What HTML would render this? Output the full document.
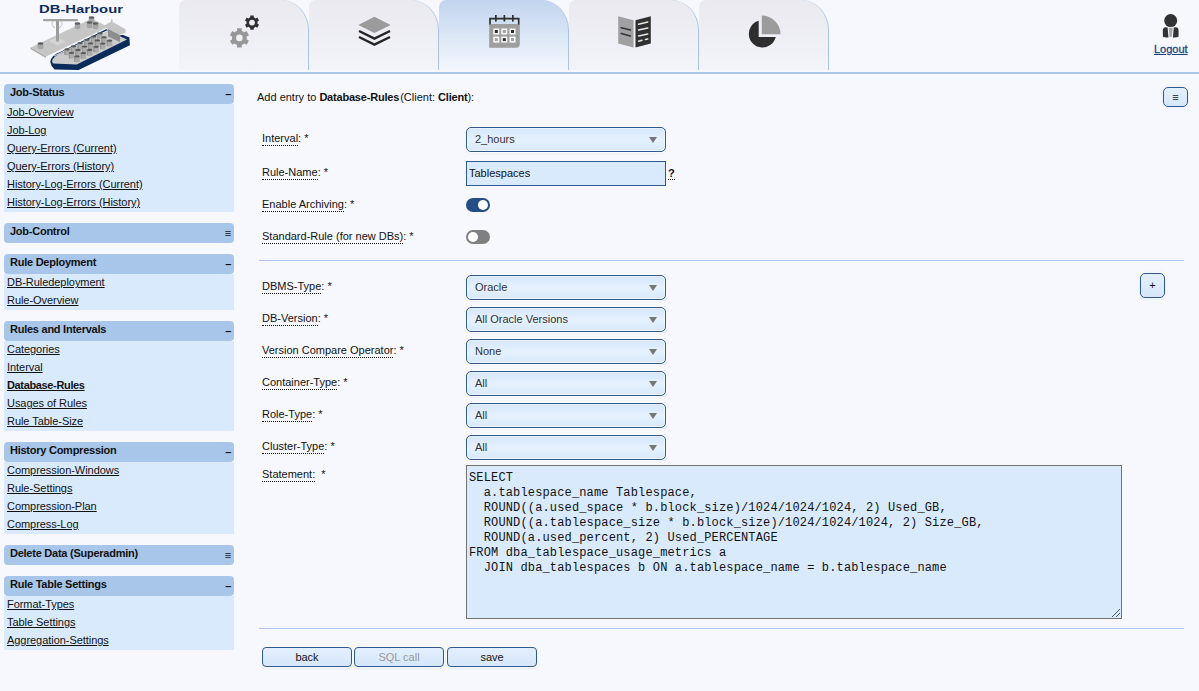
<!DOCTYPE html>
<html><head><meta charset="utf-8">
<style>
*{box-sizing:border-box;margin:0;padding:0}
html,body{width:1199px;height:691px;overflow:hidden;background:#f7f8fd;font-family:"Liberation Sans",sans-serif;font-size:11px;color:#111}
.abs{position:absolute}
#hdrline{position:absolute;left:0;top:72px;width:1199px;height:2px;background:#a9c5e9}
.tab{position:absolute;top:0;width:130px;height:70px;border-radius:7px 28px 0 0 / 7px 30px 0 0;background:linear-gradient(#e9e9ef,#f3f4f9);border-right:1px solid #a9c5ea}
.tab.act{background:linear-gradient(#c2d5ef,#f3f6fd)}
.logout{position:absolute;left:1154px;top:43px;color:#1b4585;text-decoration:underline;font-size:11px;-webkit-text-stroke:0.3px #1b4585}
.sec{position:absolute;left:4px;width:230px}
.sh{height:20px;background:#a8c6ea;border-radius:4px;font-weight:bold;letter-spacing:-0.25px;padding-left:6px;line-height:16px;position:relative}
.sh.c{border-radius:4px}
.sh .t{position:absolute;right:3px;top:2px;font-size:11px}
.si{background:#daeafd}
.si a{display:block;height:18px;line-height:16px;padding-left:3px;color:#111;text-decoration:underline;letter-spacing:-0.05px}
.lbl{position:absolute;left:262px}
.lbl span{border-bottom:1px dotted #111;padding-bottom:1px}
.sel{position:absolute;left:466px;width:200px;height:25px;border:1px solid #2f5a8f;border-radius:5px;background:linear-gradient(#d6e8fd,#e5f1fe 50%,#d9eafd);padding-left:8px;line-height:23px;color:#333;box-shadow:inset 0 0 0 1px rgba(255,255,255,.45),0 0 0 1px rgba(255,255,255,.8),0 1px 2px 1px rgba(0,0,0,.035)}
.sel:after{content:"";position:absolute;right:8.5px;top:9px;border-left:4px solid transparent;border-right:4px solid transparent;border-top:6px solid #777}
.inp{position:absolute;left:466px;top:161px;width:200px;height:25px;border:1.5px solid #2f5a8f;background:#daeafd;padding-left:2px;line-height:22px;color:#111}
.tog{position:absolute;left:466px;width:24px;height:14px;border-radius:7px}
.tog i{position:absolute;top:2px;width:10px;height:10px;border-radius:50%;background:#fff}
.btn{position:absolute;top:647px;height:20px;width:90px;border:1px solid #2f5a8f;border-radius:4px;background:linear-gradient(#e3effd,#d6e7fb);text-align:center;line-height:18px;box-shadow:0 0 0 1px rgba(255,255,255,.8),0 1px 2px 1px rgba(0,0,0,.06)}
.sq{position:absolute;border:1.3px solid #2f5a8f;border-radius:5px;background:linear-gradient(#e3effd,#d6e7fb);text-align:center;box-shadow:0 0 4px rgba(120,130,200,.12)}
.hr{position:absolute;left:259px;width:925px;height:1px;background:#adc8ea}
#ta{position:absolute;left:466px;top:465px;width:656px;height:154px;border:1px solid #737373;background:#daeafd;font-family:"Liberation Mono",monospace;font-size:12px;line-height:15px;padding:5px 0 0 2px;white-space:pre;letter-spacing:0.15px;color:#111}
</style></head><body>
<svg class="abs" style="left:0;top:0" width="140" height="72" viewBox="0 0 140 72">
<text x="81" y="13.2" text-anchor="middle" font-family="Liberation Sans" font-weight="bold" font-size="11.8" fill="#0c2c5c" textLength="84" lengthAdjust="spacingAndGlyphs">DB-Harbour</text>
<polygon points="30.5,47.5 92,18.5 108,27 46,56.5" fill="#c6c6c6"/>
<polygon points="30.5,47.5 46,56.5 46,58 30.5,49" fill="#a4a4a4"/>
<polygon points="48.5,41 57,37.5 66,41.5 57,45.5" fill="#d4d4d4"/>
<rect x="56" y="20" width="3" height="21.5" fill="#9c9c9c"/>
<rect x="43" y="19" width="35" height="2.2" rx="1" fill="#a2a2a2"/>
<path d="M53,21 q-3,4 2,7 M61,21 q3,4 -2,7" stroke="#777" stroke-width="0.4" fill="none"/>
<g transform="translate(40.5,43.5)"><path d="M-2.8,0 v4.6 a2.8,1.1 0 0 0 5.6,0 v-4.6z" fill="#a5a5a5"/><ellipse cx="0" cy="0" rx="2.8" ry="1.2" fill="#5e5e5e"/></g>
<g transform="translate(77.5,23.5)"><path d="M-2.8,0 v4.6 a2.8,1.1 0 0 0 5.6,0 v-4.6z" fill="#a5a5a5"/><ellipse cx="0" cy="0" rx="2.8" ry="1.2" fill="#5e5e5e"/></g>
<g transform="translate(91.5,17.5)"><path d="M-2.8,0 v4.6 a2.8,1.1 0 0 0 5.6,0 v-4.6z" fill="#a5a5a5"/><ellipse cx="0" cy="0" rx="2.8" ry="1.2" fill="#5e5e5e"/></g>
<g transform="translate(89.5,22.5)"><path d="M-2.8,0 v4.6 a2.8,1.1 0 0 0 5.6,0 v-4.6z" fill="#a5a5a5"/><ellipse cx="0" cy="0" rx="2.8" ry="1.2" fill="#5e5e5e"/></g>
<g transform="translate(95.5,23.5)"><path d="M-2.8,0 v4.6 a2.8,1.1 0 0 0 5.6,0 v-4.6z" fill="#a5a5a5"/><ellipse cx="0" cy="0" rx="2.8" ry="1.2" fill="#5e5e5e"/></g>
<path d="M50.2,61.8 Q51.5,55 60.8,51.8 L107.5,28.6 L129.4,37.6 L129.9,45.2 L78.6,69.9 L54.5,69.6 Q51,66.5 50.2,61.8 Z" fill="#0b2b5b"/>
<path d="M52,61.2 Q53.5,55.8 61.6,53 L107.5,30.4 L127,39.6 L76.7,64.6 L53,63.6 Z" fill="#cbcbcb"/>
<path d="M54,56 L107.5,30.6" stroke="#f4f4f4" stroke-width="0.8"/>
<g transform="translate(67.1,49.4)"><path d="M-2.8,0 v4.8 a2.8,1.1 0 0 0 5.6,0 v-4.8z" fill="#ababab"/><path d="M-2.8,0 v4.8 a2.8,1.1 0 0 0 1.2,1 v-4.8z" fill="#959595"/><ellipse cx="0" cy="0" rx="2.8" ry="1.15" fill="#5a5a5a"/></g>
<g transform="translate(73.5,46.3)"><path d="M-2.8,0 v4.8 a2.8,1.1 0 0 0 5.6,0 v-4.8z" fill="#ababab"/><path d="M-2.8,0 v4.8 a2.8,1.1 0 0 0 1.2,1 v-4.8z" fill="#959595"/><ellipse cx="0" cy="0" rx="2.8" ry="1.15" fill="#5a5a5a"/></g>
<g transform="translate(80.2,43.1)"><path d="M-2.8,0 v4.8 a2.8,1.1 0 0 0 5.6,0 v-4.8z" fill="#ababab"/><path d="M-2.8,0 v4.8 a2.8,1.1 0 0 0 1.2,1 v-4.8z" fill="#959595"/><ellipse cx="0" cy="0" rx="2.8" ry="1.15" fill="#5a5a5a"/></g>
<g transform="translate(86.9,39.8)"><path d="M-2.8,0 v4.8 a2.8,1.1 0 0 0 5.6,0 v-4.8z" fill="#ababab"/><path d="M-2.8,0 v4.8 a2.8,1.1 0 0 0 1.2,1 v-4.8z" fill="#959595"/><ellipse cx="0" cy="0" rx="2.8" ry="1.15" fill="#5a5a5a"/></g>
<g transform="translate(93.5,36.6)"><path d="M-2.8,0 v4.8 a2.8,1.1 0 0 0 5.6,0 v-4.8z" fill="#ababab"/><path d="M-2.8,0 v4.8 a2.8,1.1 0 0 0 1.2,1 v-4.8z" fill="#959595"/><ellipse cx="0" cy="0" rx="2.8" ry="1.15" fill="#5a5a5a"/></g>
<g transform="translate(99.9,33.4)"><path d="M-2.8,0 v4.8 a2.8,1.1 0 0 0 5.6,0 v-4.8z" fill="#ababab"/><path d="M-2.8,0 v4.8 a2.8,1.1 0 0 0 1.2,1 v-4.8z" fill="#959595"/><ellipse cx="0" cy="0" rx="2.8" ry="1.15" fill="#5a5a5a"/></g>
<g transform="translate(71.6,52.9)"><path d="M-2.8,0 v4.8 a2.8,1.1 0 0 0 5.6,0 v-4.8z" fill="#ababab"/><path d="M-2.8,0 v4.8 a2.8,1.1 0 0 0 1.2,1 v-4.8z" fill="#959595"/><ellipse cx="0" cy="0" rx="2.8" ry="1.15" fill="#5a5a5a"/></g>
<g transform="translate(78.0,50.0)"><path d="M-2.8,0 v4.8 a2.8,1.1 0 0 0 5.6,0 v-4.8z" fill="#ababab"/><path d="M-2.8,0 v4.8 a2.8,1.1 0 0 0 1.2,1 v-4.8z" fill="#959595"/><ellipse cx="0" cy="0" rx="2.8" ry="1.15" fill="#5a5a5a"/></g>
<g transform="translate(84.6,46.6)"><path d="M-2.8,0 v4.8 a2.8,1.1 0 0 0 5.6,0 v-4.8z" fill="#ababab"/><path d="M-2.8,0 v4.8 a2.8,1.1 0 0 0 1.2,1 v-4.8z" fill="#959595"/><ellipse cx="0" cy="0" rx="2.8" ry="1.15" fill="#5a5a5a"/></g>
<g transform="translate(90.7,43.4)"><path d="M-2.8,0 v4.8 a2.8,1.1 0 0 0 5.6,0 v-4.8z" fill="#ababab"/><path d="M-2.8,0 v4.8 a2.8,1.1 0 0 0 1.2,1 v-4.8z" fill="#959595"/><ellipse cx="0" cy="0" rx="2.8" ry="1.15" fill="#5a5a5a"/></g>
<g transform="translate(97.4,40.4)"><path d="M-2.8,0 v4.8 a2.8,1.1 0 0 0 5.6,0 v-4.8z" fill="#ababab"/><path d="M-2.8,0 v4.8 a2.8,1.1 0 0 0 1.2,1 v-4.8z" fill="#959595"/><ellipse cx="0" cy="0" rx="2.8" ry="1.15" fill="#5a5a5a"/></g>
<g transform="translate(104.0,37.3)"><path d="M-2.8,0 v4.8 a2.8,1.1 0 0 0 5.6,0 v-4.8z" fill="#ababab"/><path d="M-2.8,0 v4.8 a2.8,1.1 0 0 0 1.2,1 v-4.8z" fill="#959595"/><ellipse cx="0" cy="0" rx="2.8" ry="1.15" fill="#5a5a5a"/></g>
<g transform="translate(77.0,56.4)"><path d="M-2.8,0 v4.8 a2.8,1.1 0 0 0 5.6,0 v-4.8z" fill="#ababab"/><path d="M-2.8,0 v4.8 a2.8,1.1 0 0 0 1.2,1 v-4.8z" fill="#959595"/><ellipse cx="0" cy="0" rx="2.8" ry="1.15" fill="#5a5a5a"/></g>
<g transform="translate(83.4,53.2)"><path d="M-2.8,0 v4.8 a2.8,1.1 0 0 0 5.6,0 v-4.8z" fill="#ababab"/><path d="M-2.8,0 v4.8 a2.8,1.1 0 0 0 1.2,1 v-4.8z" fill="#959595"/><ellipse cx="0" cy="0" rx="2.8" ry="1.15" fill="#5a5a5a"/></g>
<g transform="translate(89.7,50.0)"><path d="M-2.8,0 v4.8 a2.8,1.1 0 0 0 5.6,0 v-4.8z" fill="#ababab"/><path d="M-2.8,0 v4.8 a2.8,1.1 0 0 0 1.2,1 v-4.8z" fill="#959595"/><ellipse cx="0" cy="0" rx="2.8" ry="1.15" fill="#5a5a5a"/></g>
<g transform="translate(96.1,46.8)"><path d="M-2.8,0 v4.8 a2.8,1.1 0 0 0 5.6,0 v-4.8z" fill="#ababab"/><path d="M-2.8,0 v4.8 a2.8,1.1 0 0 0 1.2,1 v-4.8z" fill="#959595"/><ellipse cx="0" cy="0" rx="2.8" ry="1.15" fill="#5a5a5a"/></g>
<g transform="translate(102.8,43.6)"><path d="M-2.8,0 v4.8 a2.8,1.1 0 0 0 5.6,0 v-4.8z" fill="#ababab"/><path d="M-2.8,0 v4.8 a2.8,1.1 0 0 0 1.2,1 v-4.8z" fill="#959595"/><ellipse cx="0" cy="0" rx="2.8" ry="1.15" fill="#5a5a5a"/></g>
<g transform="translate(109.5,40.7)"><path d="M-2.8,0 v4.8 a2.8,1.1 0 0 0 5.6,0 v-4.8z" fill="#ababab"/><path d="M-2.8,0 v4.8 a2.8,1.1 0 0 0 1.2,1 v-4.8z" fill="#959595"/><ellipse cx="0" cy="0" rx="2.8" ry="1.15" fill="#5a5a5a"/></g>
<g transform="translate(0,2)">
<polygon points="105,23 111.5,19.2 125.5,27.2 125.5,31.2 119,33 105,25.6" fill="#c4c4c4"/>
<polygon points="105,25.6 119,32.6 125.5,30.8 125.5,31.8 119,33.8 105,26.6" fill="#f2f2f2"/>
<polygon points="108,27 120,33 120,40 108,34.5" fill="#8e8e8e"/>
<polygon points="111,19.5 112,16 112.5,19.8" fill="#aaa"/>
</g>
</svg>
<div id="hdrline"></div>
<div class="tab" style="left:179px"></div>
<div class="tab" style="left:309px"></div>
<div class="tab act" style="left:439px"></div>
<div class="tab" style="left:569px"></div>
<div class="tab" style="left:699px"></div>
<svg class="abs" style="left:0;top:0" width="1199" height="72" viewBox="0 0 1199 72">
<path d="M237.01,30.79 L237.04,28.29 L241.76,28.29 L241.79,30.79 L244.36,32.27 L246.55,31.05 L248.91,35.14 L246.75,36.42 L246.75,39.38 L248.91,40.66 L246.55,44.75 L244.36,43.53 L241.79,45.01 L241.76,47.51 L237.04,47.51 L237.01,45.01 L234.44,43.53 L232.25,44.75 L229.89,40.66 L232.05,39.38 L232.05,36.42 L229.89,35.14 L232.25,31.05 L234.44,32.27 Z M236.10,37.90 a3.30,3.30 0 1 0 6.60,0 a3.30,3.30 0 1 0 -6.60,0 Z" fill="#979797" fill-rule="evenodd"/>
<path d="M250.21,17.29 L250.26,15.51 L253.74,15.51 L253.79,17.29 L255.70,18.40 L257.27,17.55 L259.01,20.56 L257.49,21.49 L257.49,23.71 L259.01,24.64 L257.27,27.65 L255.70,26.80 L253.79,27.91 L253.74,29.69 L250.26,29.69 L250.21,27.91 L248.30,26.80 L246.73,27.65 L244.99,24.64 L246.51,23.71 L246.51,21.49 L244.99,20.56 L246.73,17.55 L248.30,18.40 Z M249.10,22.60 a2.90,2.90 0 1 0 5.80,0 a2.90,2.90 0 1 0 -5.80,0 Z" fill="#2e2e2e" fill-rule="evenodd"/>
<polygon points="374.4,16.8 390.7,25.1 374.4,33 358.3,25.1" fill="#9b9b9b"/>
<polyline points="359,31 374.4,38.6 390,31" fill="none" stroke="#262626" stroke-width="2.5" stroke-linejoin="miter"/>
<polyline points="359,37 374.4,44.6 390,37" fill="none" stroke="#262626" stroke-width="2.5" stroke-linejoin="miter"/>
<path d="M489.2,24 H519.8 V44 Q519.8,47.8 516,47.8 H489.2 Z" fill="#9e9e9e"/>
<path d="M490,24.5 V18.6 H518.7 V24.5" fill="none" stroke="#2e2e2e" stroke-width="1.7"/>
<rect x="495" y="15" width="1.7" height="6.6" fill="#2e2e2e"/>
<rect x="503.5" y="15" width="1.7" height="6.6" fill="#2e2e2e"/>
<rect x="512" y="15" width="1.7" height="6.6" fill="#2e2e2e"/>
<rect x="493.3" y="28.5" width="6" height="6" fill="#fff"/><rect x="494.8" y="30.0" width="3" height="3" fill="#2a2a2a"/><rect x="501.3" y="28.5" width="6" height="6" fill="#fff"/><rect x="502.8" y="30.0" width="3" height="3" fill="#9e9e9e"/><rect x="509.5" y="28.5" width="6" height="6" fill="#fff"/><rect x="511.0" y="30.0" width="3" height="3" fill="#2a2a2a"/><rect x="493.3" y="36.6" width="6" height="6" fill="#fff"/><rect x="494.8" y="38.1" width="3" height="3" fill="#9e9e9e"/><rect x="501.3" y="36.6" width="6" height="6" fill="#fff"/><rect x="502.8" y="38.1" width="3" height="3" fill="#2a2a2a"/><rect x="509.5" y="36.6" width="6" height="6" fill="#fff"/><rect x="511.0" y="38.1" width="3" height="3" fill="#9e9e9e"/>
<polygon points="618.2,16.2 633.5,20.2 633.5,47.5 618.2,43.4" fill="#a0a0a0"/>
<polygon points="635.5,20.2 650.8,16.2 650.8,43.4 635.5,47.5" fill="#303030"/>
<path d="M621.2,27.7 L630.4,30.1 M621.2,33.5 L630.4,35.9" stroke="#333" stroke-width="1.6" stroke-linecap="round"/>
<path d="M638.6,24.3 L647.8,22 M638.6,30.1 L647.8,28.1 M638.6,35.9 L647.8,33.9 M638.6,41.3 L642,40.3 M645.4,39.6 L647.8,39" stroke="#e8e8e8" stroke-width="1.5" stroke-linecap="round"/>
<path d="M761.8,34.2 V15.5 A18.7,18.7 0 0 1 780.5,34.2 Z" fill="#9c9c9c"/>
<path d="M758.7,36.9 H775.7 A13.6,13.6 0 1 1 758.7,20.8 Z" fill="#2e2e2e"/>
<circle cx="1170.7" cy="20.6" r="6.5" fill="#333"/>
<path d="M1162.8,31 Q1162.8,27.4 1165.5,27.3 L1167.6,27.6 L1168.5,37.6 Q1164,37.6 1162.9,36.8 Z" fill="#333"/>
<path d="M1178.6,31 Q1178.6,27.4 1175.9,27.3 L1173.8,27.6 L1172.9,37.6 Q1177.4,37.6 1178.5,36.8 Z" fill="#333"/>
<polygon points="1168.6,27.8 1172.8,27.8 1171.8,37 1169.6,37" fill="#a8a8a8"/>
</svg>
<div class="logout">Logout</div>

<div class="sec" style="top:84px"><div class="sh">Job-Status<span class="t">&#8211;</span></div><div class="si">
<a>Job-Overview</a><a>Job-Log</a><a>Query-Errors (Current)</a><a>Query-Errors (History)</a><a>History-Log-Errors (Current)</a><a>History-Log-Errors (History)</a></div></div>
<div class="sec" style="top:223px"><div class="sh c">Job-Control<span class="t">&#8801;</span></div></div>
<div class="sec" style="top:254px"><div class="sh">Rule Deployment<span class="t">&#8211;</span></div><div class="si">
<a>DB-Ruledeployment</a><a>Rule-Overview</a></div></div>
<div class="sec" style="top:321px"><div class="sh">Rules and Intervals<span class="t">&#8211;</span></div><div class="si">
<a>Categories</a><a>Interval</a><a style="font-weight:bold;letter-spacing:-0.35px">Database-Rules</a><a>Usages of Rules</a><a>Rule Table-Size</a></div></div>
<div class="sec" style="top:442px"><div class="sh">History Compression<span class="t">&#8211;</span></div><div class="si">
<a>Compression-Windows</a><a>Rule-Settings</a><a>Compression-Plan</a><a>Compress-Log</a></div></div>
<div class="sec" style="top:545px"><div class="sh c">Delete Data (Superadmin)<span class="t">&#8801;</span></div></div>
<div class="sec" style="top:576px"><div class="sh">Rule Table Settings<span class="t">&#8211;</span></div><div class="si">
<a>Format-Types</a><a>Table Settings</a><a>Aggregation-Settings</a></div></div>

<div class="abs" style="left:257px;top:91px">Add entry to <b style="letter-spacing:-0.2px">Database-Rules</b><span style="margin-left:-2px"> (Client: </span><b style="letter-spacing:-0.2px">Client</b>):</div>
<div class="sq" style="left:1163px;top:87px;width:25px;height:20px;line-height:19px;font-weight:bold">&#8801;</div>

<div class="lbl" style="top:132px"><span>Interval</span>: *</div>
<div class="sel" style="top:127px">2_hours</div>
<div class="lbl" style="top:166px"><span>Rule-Name</span>: *</div>
<div class="inp">Tablespaces</div>
<div class="abs" style="left:668px;top:167px;font-weight:bold"><span style="border-bottom:1px dotted #111">?</span></div>
<div class="lbl" style="top:198px"><span>Enable Archiving</span>: *</div>
<div class="tog" style="top:198px;background:#234e85"><i style="left:12px"></i></div>
<div class="lbl" style="top:230px"><span>Standard-Rule (for new DBs)</span>: *</div>
<div class="tog" style="top:230px;background:#808080"><i style="left:2px"></i></div>
<div class="hr" style="top:260px"></div>

<div class="lbl" style="top:280px"><span>DBMS-Type</span>: *</div>
<div class="sel" style="top:275px">Oracle</div>
<div class="sq" style="left:1140px;top:273px;width:25px;height:25px;line-height:22px">+</div>
<div class="lbl" style="top:312px"><span>DB-Version</span>: *</div>
<div class="sel" style="top:307px">All Oracle Versions</div>
<div class="lbl" style="top:344px"><span>Version Compare Operator</span>: *</div>
<div class="sel" style="top:339px">None</div>
<div class="lbl" style="top:376px"><span>Container-Type</span>: *</div>
<div class="sel" style="top:371px">All</div>
<div class="lbl" style="top:408px"><span>Role-Type</span>: *</div>
<div class="sel" style="top:403px">All</div>
<div class="lbl" style="top:440px"><span>Cluster-Type</span>: *</div>
<div class="sel" style="top:435px">All</div>
<div class="lbl" style="top:468px"><span>Statement:</span> &nbsp;*</div>
<div id="ta">SELECT
  a.tablespace_name Tablespace,
  ROUND((a.used_space * b.block_size)/1024/1024/1024, 2) Used_GB,
  ROUND((a.tablespace_size * b.block_size)/1024/1024/1024, 2) Size_GB,
  ROUND(a.used_percent, 2) Used_PERCENTAGE
FROM dba_tablespace_usage_metrics a
  JOIN dba_tablespaces b ON a.tablespace_name = b.tablespace_name</div>
<svg class="abs" style="left:1110px;top:607px" width="12" height="12"><path d="M2,10 L10,2 M6,10 L10,6" stroke="#555" stroke-width="1"/></svg>
<div class="hr" style="top:628px"></div>

<div class="btn" style="left:262px">back</div>
<div class="btn" style="left:354px;color:#999">SQL call</div>
<div class="btn" style="left:447px">save</div>
</body></html>
